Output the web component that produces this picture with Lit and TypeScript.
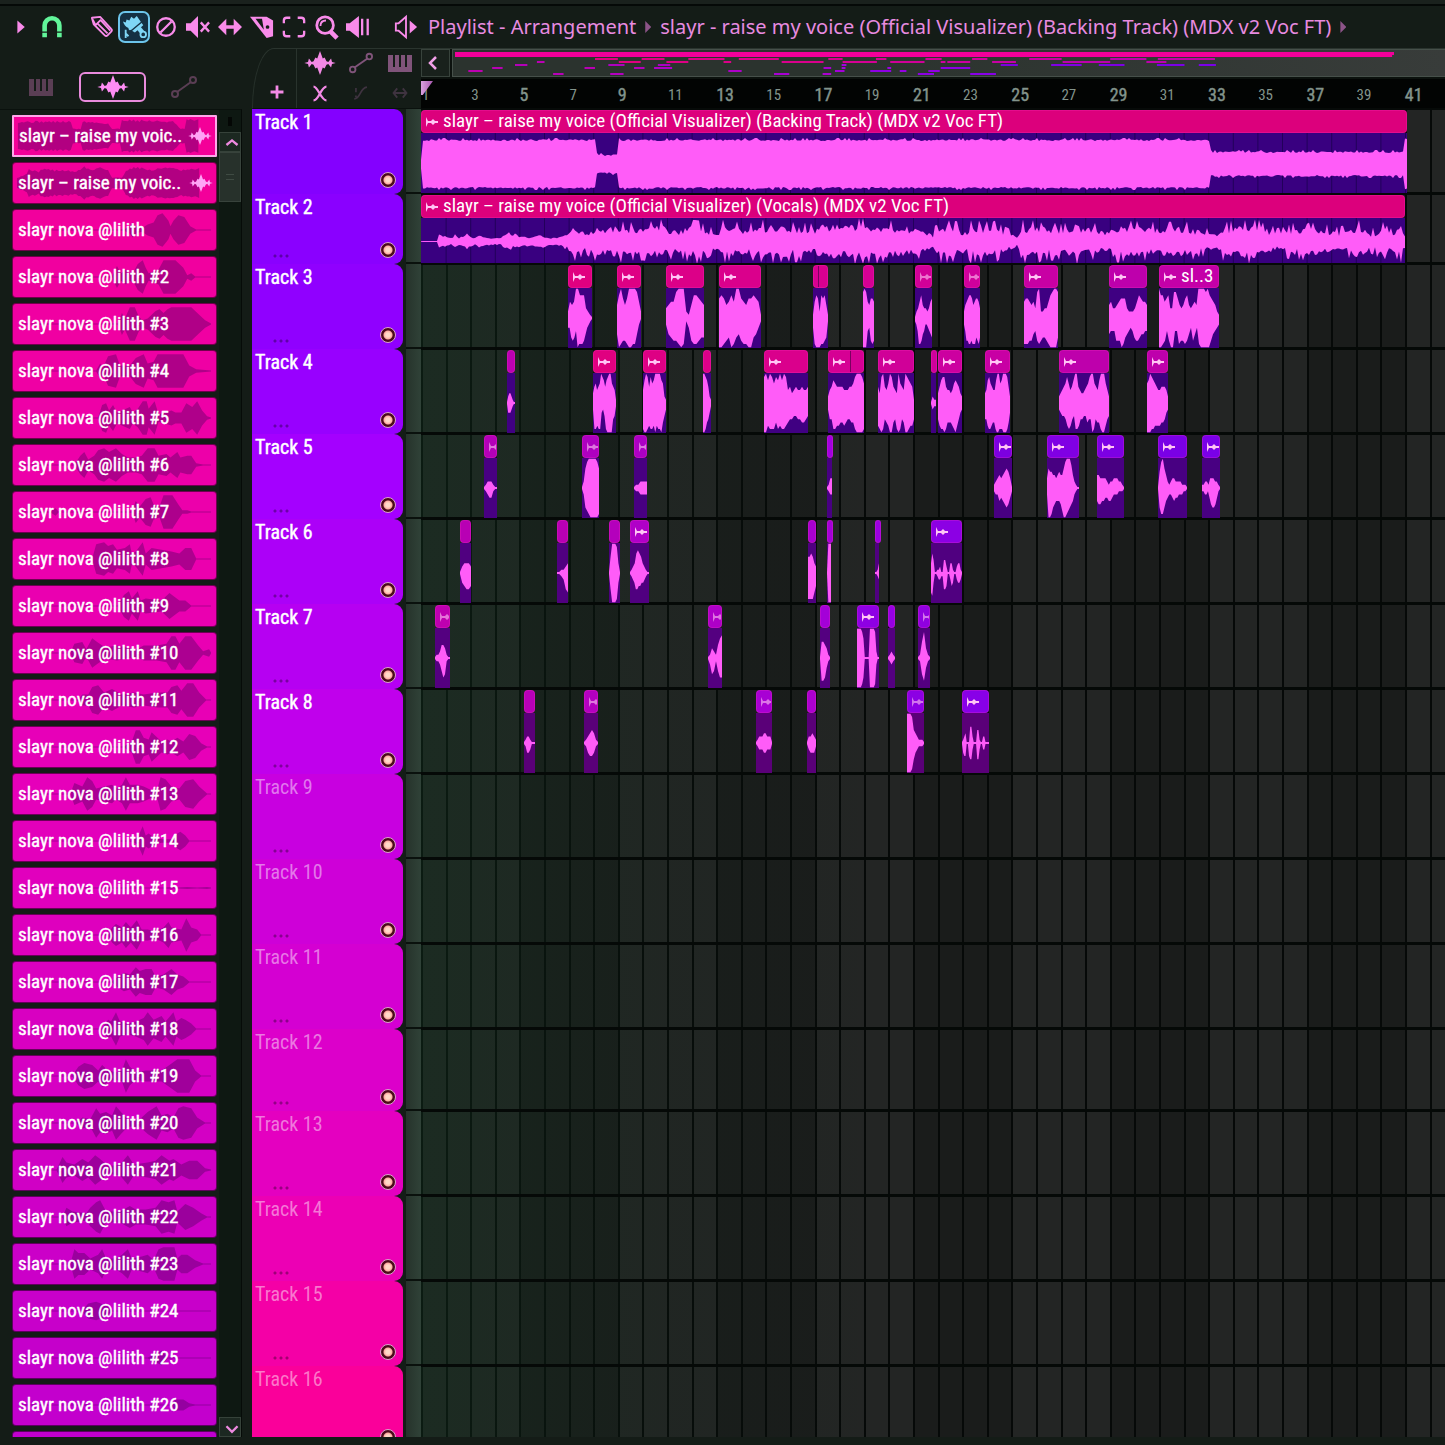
import { LitElement, html, svg, css, nothing } from "lit";
import { customElement, property, state } from "lit/decorators.js";
import { classMap } from "lit/directives/class-map.js";
import { styleMap } from "lit/directives/style-map.js";

/* ---------- timeline data ---------- */

/** Timeline units visible in the window; one bar is BAR units wide. */
const SPAN = 1024;
const BAR = 24.6;
const pct = (u: number) => `${(u / SPAN) * 100}%`;

interface Clip {
  start: number;
  end: number;
  hue: string;
  wave: string;
  label?: string;
  split?: number;
}

interface Track {
  name: string;
  height: number;
  color: string;
  body: string;
  clips: Clip[];
}

const clip = (start: number, end: number, hue: string, wave: string, extra: Partial<Clip> = {}): Clip => ({
  start,
  end,
  hue,
  wave,
  ...extra,
});

const SONG = "slayr – raise my voice (Official Visualizer) (Backing Track) (MDX v2 Voc FT)";
const VOCALS = "slayr – raise my voice (Official Visualizer) (Vocals) (MDX v2 Voc FT)";

const TRACKS: Track[] = [
  { name: "Track 1", height: 85, color: "#8400ff", body: "#390080", clips: [clip(0, 986, "#dc007c", "song", { label: SONG })] },
  { name: "Track 2", height: 70, color: "#8a00ff", body: "#390080", clips: [clip(0, 984, "#dc007c", "vocals", { label: VOCALS })] },
  {
    name: "Track 3",
    height: 85,
    color: "#9000ff",
    body: "#3f0082",
    clips: [
      clip(147, 171, "#e00080", "2545997773210/3367649888753210"),
      clip(196, 220, "#de0084", "4796469999852/5987789988520"),
      clip(245, 283, "#dc0088", "3455899921477654/2567789813788766"),
      clip(298, 340, "#da008c", "676457599654667651/998769865788996531"),
      clip(392, 407, "#d80090", "1576276741/3899988761", { split: 400 }),
      clip(442, 453, "#d60094", "89854665/99943787"),
      clip(494, 511, "#d20098", "023574332356/12488754223456"),
      clip(543, 559, "#d0009c", "2456776456653/24778878886786"),
      clip(603, 637, "#c800a4", "5665453892233578998/8887754787667899996"),
      clip(688, 726, "#be00ac", "45334566632223576554/5444777986543467765544"),
      clip(738, 798, "#c400a8", "977567338864346743454999989765421/9987479944877875375389999975432", { label: "sl..3" }),
    ],
  },
  {
    name: "Track 4",
    height: 85,
    color: "#9800ff",
    body: "#400082",
    clips: [
      clip(86, 94, "#bc00b4", "02332100/03332100"),
      clip(172, 195, "#e00080", "356456987578996541/28878832489999541"),
      clip(222, 245, "#de0084", "4798586799997621/8998788797889642"),
      clip(282, 290, "#dc0088", "9987521/9986531"),
      clip(343, 387, "#da008c", "89798687979845345445445/99788868788765544556654"),
      clip(407, 443, "#d60094", "245765555444556899986/255887766765566899998", { split: 433 }),
      clip(457, 493, "#d00098", "5389546985439654987651/7898567996589856998775"),
      clip(510, 515, "#d0009c", "0211/0211"),
      clip(517, 541, "#cc00a0", "3578854434676532/5788986667897532"),
      clip(564, 589, "#c800a4", "3478654479967999852/55788766899888999863"),
      clip(638, 688, "#be00ac", "23456864579954334568996547999642/2344578754887554465598566899754"),
      clip(726, 747, "#be00ac", "67987654455542/99988777766532"),
    ],
  },
  {
    name: "Track 5",
    height: 85,
    color: "#a400ff",
    body: "#480082",
    clips: [
      clip(63, 76, "#b400b8", "01222100/01233100"),
      clip(161, 178, "#ae00c0", "02689999986/02678999998"),
      clip(213, 226, "#ac00c4", "0112222/0112222"),
      clip(406, 411, "#a200e0", "0133/0122"),
      clip(573, 591, "#7c00e0", "12343456530/12243456531"),
      clip(626, 658, "#8000e4", "3655443454468999742100/2998654445799876542100"),
      clip(676, 703, "#7c00e4", "44333321223332210/45544334432221110"),
      clip(737, 766, "#7a00e6", "0589642123322221110/0688643223433222110"),
      clip(781, 799, "#7a00e8", "112213332210/1122135665310"),
    ],
  },
  {
    name: "Track 6",
    height: 85,
    color: "#ac00f8",
    body: "#500080",
    clips: [
      clip(39, 50, "#b800b4", "023332/034554"),
      clip(136, 147, "#b800b4", "001123/001256"),
      clip(188, 199, "#b400bc", "05999830/05999830"),
      clip(209, 228, "#b000c8", "0123676532100/01235544332100"),
      clip(387, 395, "#a800d0", "556532/888864"),
      clip(406, 410, "#a400d8", "0999/0999"),
      clip(454, 458, "#9c00e0", "0013/0012"),
      clip(510, 541, "#8c00e4", "3640011200442003310023310/6730012211554002430023320"),
    ],
  },
  {
    name: "Track 7",
    height: 85,
    color: "#b600f2",
    body: "#540080",
    clips: [
      clip(14, 29, "#be00b0", "0112443100/0112465100"),
      clip(287, 301, "#ae00c8", "01321467/02541466"),
      clip(399, 409, "#a400d8", "0554310/0776310"),
      clip(436, 458, "#8e00e4", "999986000099998200/999986000099998200"),
      clip(467, 474, "#9600e4", "01210/01210"),
      clip(497, 509, "#9000e0", "0158310/0157310"),
    ],
  },
  {
    name: "Track 8",
    height: 85,
    color: "#c000ec",
    body: "#5a0078",
    clips: [
      clip(103, 114, "#b800b8", "01221000/01332000"),
      clip(163, 177, "#b400c0", "01234310/01344310"),
      clip(335, 351, "#a800d4", "01222332220/01222332220"),
      clip(386, 395, "#ac00d0", "022321/023331"),
      clip(486, 503, "#8c00e4", "99984321110/99985321110"),
      clip(541, 568, "#8800e8", "012300055200044100220000/034400455200055200220000"),
    ],
  },
  { name: "Track 9", height: 85, color: "#c800e0", body: "", clips: [] },
  { name: "Track 10", height: 85, color: "#ce00d8", body: "", clips: [] },
  { name: "Track 11", height: 85, color: "#d400d2", body: "", clips: [] },
  { name: "Track 12", height: 82, color: "#dc00ca", body: "", clips: [] },
  { name: "Track 13", height: 85, color: "#e400c0", body: "", clips: [] },
  { name: "Track 14", height: 85, color: "#ec00b4", body: "", clips: [] },
  { name: "Track 15", height: 85, color: "#f400a6", body: "", clips: [] },
  { name: "Track 16", height: 85, color: "#fa009a", body: "", clips: [] },
];

/* Sample thumbnails: alternating x and amplitude (0–9). */
const THUMBS = [
  "4 8 58 8 60 4 68 4 70 8 97 7 99 4 109 4 110 9 162 8 170 4 174 4 175 9 188 9 189 0",
  "4 3 14 5 16 8 25 6 30 8 42 7 55 7 62 6 72 9 80 7 88 9 97 7 99 3 111 3 113 7 125 9 140 7 155 9 170 7 188 8 189 2",
  "112 0 118 2 121 4 124 2 130 1 136 3 142 4 146 8 151 9 157 5 159 2 162 5 167 8 173 7 179 2 185 0",
  "100 0 105 6 109 2 114 4 117 2 122 3 126 7 131 9 134 5 137 2 147 4 152 9 164 9 172 5 176 1 180 2 184 0",
  "106 0 110 6 113 3 118 9 123 9 127 4 131 2 136 3 144 7 148 8 152 6 156 8 160 9 180 9 188 5 194 2 200 0",
  "84 0 88 4 91 2 96 8 104 9 108 3 118 3 124 7 132 9 136 4 142 5 146 9 172 9 178 3 185 1",
  "86 0 90 7 94 8 97 4 101 7 105 3 110 4 118 6 121 3 126 5 131 9 135 9 137 5 143 9 147 2 160 4 164 3 170 3 175 8 181 6 186 9 191 4 196 1",
  "62 0 68 5 72 7 76 3 82 5 86 8 92 9 97 7 104 9 110 6 116 4 124 4 130 5 136 9 143 9 147 5 155 6 159 4 166 7 169 4 176 5 180 5 185 1 192 0",
  "38 0 43 2 46 0 120 0 124 6 128 3 134 7 139 8 142 4 148 3 152 9 161 9 167 4 171 1 176 1 180 0",
  "80 0 84 8 92 9 96 7 101 8 105 5 113 6 118 8 120 3 124 4 131 9 134 3 140 6 150 5 160 4 168 3 174 6 180 6 185 0",
  "106 0 112 6 117 8 120 4 126 8 129 3 134 4 150 3 158 7 163 5 168 3 174 3 180 0",
  "58 0 62 5 70 6 74 2 80 8 85 6 93 3 105 4 115 3 125 2 132 4 145 4 155 5 160 9 164 9 168 5 174 9 180 9 187 4 192 1 198 2 200 0",
  "66 0 70 3 76 3 80 7 86 8 92 4 100 6 110 3 122 4 132 3 146 4 156 4 160 7 166 8 170 5 176 9 182 9 188 4 195 0",
  "112 0 120 3 124 9 128 9 132 5 137 4 140 8 144 6 150 3 156 4 160 3 166 5 172 3 178 7 184 6 190 2 196 0",
  "58 0 62 6 66 5 70 4 75 9 80 7 84 3 92 4 100 5 104 3 110 5 114 9 118 5 126 5 132 4 140 2 146 3 149 9 154 8 160 4 168 3 174 7 182 8 188 4 196 0",
  "120 0 126 2 131 8 134 3 137 4 142 2 150 1 160 1 166 4 169 5 174 3 178 0",
  "150 0 158 0.4 166 0.1 176 0.6 186 0.2 196 0.5 200 0",
  "96 0 100 4 104 6 110 4 114 7 119 4 125 8 130 3 136 3 144 2 152 4 157 7 160 4 170 3 175 9 180 4 186 3 190 0",
  "100 0 106 3 112 5 118 4 124 8 128 6 134 7 140 7 144 3 152 4 160 7 166 4 172 3 178 0",
  "90 0 96 5 99 4 104 9 108 4 116 3 124 4 132 6 136 9 142 5 150 7 154 4 162 9 165 4 170 6 174 5 180 3 185 0",
  "60 0 66 5 72 7 80 6 86 3 90 6 96 3 104 2 110 3 114 9 118 5 124 2 134 3 140 3 150 3 158 6 166 9 178 9 184 3 190 0",
  "64 0 70 3 78 2 84 8 88 5 94 6 100 4 104 9 109 6 116 2 128 2 136 6 145 9 150 4 156 5 162 3 167 8 172 9 180 8 186 3 194 0",
  "44 0 50 7 54 4 62 3 70 6 76 4 83 8 88 6 96 2 108 3 116 8 122 3 136 4 144 5 150 8 158 5 162 6 170 3 178 5 186 5 194 1",
  "50 0 54 5 60 3 74 2 78 5 84 8 88 9 94 3 108 3 118 6 124 4 134 4 144 5 150 9 157 8 163 9 166 3 174 7 182 5 190 2 196 0",
  "58 0 62 8 66 6 72 6 78 3 86 5 90 8 94 3 104 3 110 5 116 8 120 3 130 4 136 5 142 2 147 8 152 9 163 9 166 3 170 5 176 5 184 2 192 0",
  "70 0 76 4 84 5 94 3 100 0",
  "136 0 144 2 150 4 156 0",
  "160 0 164 3 172 3 178 1 184 0",
  "60 0 80 4 120 6 160 4 190 0",
];

const SAMPLES = THUMBS.map((wave, i) => ({
  name: i < 2 ? "slayr – raise my voic.." : i < 28 ? `slayr nova @lilith${i > 2 ? ` #${i - 1}` : ""}` : "",
  full: i < 2,
  wave,
}));

/* ---------- waveform helpers ---------- */

const mix = (a: number[], b: number[], t: number) => `rgb(${a.map((v, i) => Math.round(v + (b[i] - v) * t)).join(" ")})`;

const sampleColor = (i: number) => {
  const t = i / 28;
  return t < 0.5
    ? mix([244, 0, 152], [230, 0, 186], t * 2)
    : mix([230, 0, 186], [192, 0, 206], (t - 0.5) * 2);
};

function rng(seed: number) {
  let s = seed;
  return () => {
    s = (s * 16807) % 2147483647;
    return s / 2147483647;
  };
}

function envelope(points: number[][], x: number) {
  for (let i = 1; i < points.length; i++) {
    const [x0, a0] = points[i - 1];
    const [x1, a1] = points[i];
    if (x <= x1) return a0 + ((a1 - a0) * (x - x0)) / Math.max(1, x1 - x0);
  }
  return points[points.length - 1][1];
}

/** Mirrored outline around y = 0 from upper and lower amplitudes. */
function outline(up: number[][], down: number[][]) {
  const top = up.map(([x, a]) => `${x.toFixed(1)} ${(-a).toFixed(2)}`);
  const low = [...down].reverse().map(([x, a]) => `${x.toFixed(1)} ${a.toFixed(2)}`);
  return `M${[...top, ...low].join("L")}Z`;
}

function digitPath(wave: string) {
  const [u, d] = wave.split("/");
  const side = (s: string) => [...s].map((c, i) => [(i * 100) / (s.length - 1), Math.max(0.3, Number(c))]);
  return outline(side(u), side(d ?? u));
}

function songPath() {
  const rand = rng(77);
  const level = (x: number) => (x < 2 ? 4 : x < 175 ? 23 : x < 198 ? 8 : x < 790 ? 23 : x < 984 ? 11 : 24);
  const side = () => {
    const out: number[][] = [];
    for (let x = 0; x <= 986; x += 2) {
      const r = rand();
      out.push([x, level(x) + (r > 0.88 ? 3 : r * 2)]);
    }
    return out;
  };
  return outline(side(), side());
}

function vocalsPath() {
  const rand = rng(4242);
  const env = [
    [0, 0.5], [16, 0.5], [18, 6], [23, 5], [30, 3], [34, 7], [38, 3], [46, 7], [54, 3], [58, 6], [70, 3], [80, 3],
    [88, 10], [98, 5], [112, 4], [120, 6], [130, 3], [140, 4], [147, 9], [149, 17], [165, 9], [174, 15], [195, 17],
    [215, 14], [240, 17], [255, 12], [275, 18], [290, 10], [297, 6], [300, 17], [325, 14], [345, 18], [395, 14],
    [400, 18], [440, 18], [470, 17], [495, 15], [512, 5], [516, 18], [538, 16], [542, 8], [550, 17], [575, 16],
    [596, 4], [602, 17], [640, 14], [655, 18], [688, 10], [692, 17], [730, 15], [765, 16], [796, 6], [802, 15],
    [835, 18], [857, 9], [870, 14], [900, 14], [915, 10], [932, 13], [936, 18], [950, 8], [962, 15], [970, 9],
    [980, 16], [984, 8],
  ];
  const side = () => {
    const out: number[][] = [];
    for (let x = 0; x <= 984; x += 2) {
      const a = envelope(env, x);
      const r = rand();
      out.push([x, a < 8 ? a * (0.75 + r * 0.4) : a * (0.5 + r * 0.55) + (r > 0.82 ? 4 : 0)]);
    }
    return out;
  };
  return outline(side(), side());
}

function thumbPath(wave: string, full: boolean) {
  const n = wave.split(" ").map(Number);
  const points: number[][] = [];
  for (let i = 0; i < n.length; i += 2) points.push([n[i], n[i + 1] * 1.85]);
  if (full) {
    const rand = rng(31);
    const out: number[][] = [];
    for (let x = 4; x <= 189; x += 2) out.push([x, envelope(points, x) * (0.88 + rand() * 0.15)]);
    return outline(out, out);
  }
  const padded = [[6, 0.4], ...points.map(([x, a]) => [x, Math.max(0.4, a)]), [200, 0.4]];
  return outline(padded, padded);
}

/* ---------- icons ---------- */

const ICONS = {
  play: svg`<path d="M8 6l8 7-8 7z" fill="currentColor"/>`,
  magnet: svg`<path d="M5 24V11.500a8 8 0 0 1 16 0V24" fill="none" stroke="currentColor" stroke-width="5"/><path d="M2 18.500h7M17 18.500h7" stroke="#141c17" stroke-width="1.500"/>`,
  pencil: svg`<g fill="none" stroke="currentColor" stroke-width="2" stroke-linejoin="round"><path d="M2 3l9-1 12 13c1 1 1 2 0 3l-4 4c-1 1-2 1-3 0L4 10z"/><path d="M8 9l11 11M12 6l10 11M3 5l3 6 6-6"/></g>`,
  brush: svg`<path d="M1 7l3 1 1-3 3 1 2-4 3 2 3-3 7 10-9 8c-2-1-3-2-4-3-2 1-3 0-3-2-3-1-5-4-6-7z" fill="currentColor"/><path d="M10 17L22 7" stroke="#143043" stroke-width="1.500"/><path d="M18 14l5 6" stroke="currentColor" stroke-width="5"/><circle cx="23" cy="21" r="3" fill="#143043" stroke="currentColor" stroke-width="2"/><path d="M4 16v9M4 20l3 3" stroke="currentColor" stroke-width="2"/>`,
  ban: svg`<g fill="none" stroke="currentColor" stroke-width="2.500"><circle cx="13" cy="13" r="9.500"/><path d="M19 7L7 19"/></g>`,
  mute: svg`<path d="M0 9h5l8-8v24l-8-8H0z" fill="currentColor"/><path d="M16 8l9 10M25 8l-9 10" stroke="currentColor" stroke-width="2.500"/>`,
  slip: svg`<path d="M0 13l9-9v7h8V4l9 9-9 9v-7H9v7z" fill="currentColor"/>`,
  slice: svg`<path d="M0 2h18l7 4v17l-7 2z" fill="currentColor"/><path d="M6 4h7l2 12z" fill="#141c17"/><circle cx="19" cy="13" r="2" fill="#141c17"/>`,
  select: svg`<g fill="none" stroke="currentColor" stroke-width="2.500"><path d="M2 9V6a3 3 0 0 1 3-3h4M17 3h4a3 3 0 0 1 3 3v3M24 17v3a3 3 0 0 1-3 3h-4M9 23H5a3 3 0 0 1-3-3v-3"/></g>`,
  zoom: svg`<circle cx="12" cy="11" r="9" fill="none" stroke="currentColor" stroke-width="3"/><path d="M7 12c0-4 2-6 6-6" fill="none" stroke="currentColor" stroke-width="2"/><path d="M18 18l7 7" stroke="currentColor" stroke-width="5"/>`,
  playback: svg`<path d="M0 9h4l10-8v24L4 17H0z" fill="currentColor"/><path d="M17.500 4v18M23.500 4v18" stroke="currentColor" stroke-width="2.500"/>`,
  speaker: svg`<path d="M2 9h3l8-7v22l-8-7H2z" fill="none" stroke="currentColor" stroke-width="2"/><path d="M17 6l8 7-8 7z" fill="currentColor"/>`,
  keys: svg`<path d="M1 5h24v17H1z" fill="currentColor"/><path d="M7 5v12M13 5v12M19 5v12" stroke="#141c17" stroke-width="2"/>`,
  wave: svg`<path d="M-4 13l4-1 1-4 3 4 2-1 2-4 2 1 3-8 3 8 2-1 2 4 2 1 3-4 1 4 4 1-4 1-1 4-3-4-2 1-2 4-2-1-3 8-3-8-2 1-2-4-2-1-3 4-1-4z" fill="currentColor"/>`,
  link: svg`<g fill="none" stroke="currentColor" stroke-width="2"><circle cx="4" cy="20" r="3"/><circle cx="22" cy="6" r="3"/><path d="M6 18L20 8"/></g>`,
  plus: svg`<path d="M13 6v14M6 13h14" stroke="currentColor" stroke-width="3"/>`,
  cross: svg`<path d="M6 6c5 0 8 15 14 15M20 6c-6 0-8 15-14 15" fill="none" stroke="currentColor" stroke-width="2.500"/>`,
  curve: svg`<path d="M5 20c8 0 6-13 15-14M7 7v5M7 16v2" fill="none" stroke="currentColor" stroke-width="2"/>`,
  spread: svg`<path d="M6 13h14M10 8l-4 5 4 5M16 8l4 5-4 5" fill="none" stroke="currentColor" stroke-width="2"/>`,
  left: svg`<path d="M13 7l-6 6 6 6" fill="none" stroke="currentColor" stroke-width="2.500"/>`,
  up: svg`<path d="M7 13l6-5 6 5" fill="none" stroke="currentColor" stroke-width="2.500"/>`,
  down: svg`<path d="M7 9l6 6 6-6" fill="none" stroke="currentColor" stroke-width="2.500"/>`,
};
type IconName = keyof typeof ICONS;

const icon = (name: IconName, size = 26) =>
  html`<svg class="icon" width=${size} height=${size} viewBox="0 0 26 26" aria-hidden="true">${ICONS[name]}</svg>`;

const shared = css`
  :host {
    display: block;
    box-sizing: border-box;
    font-family: "Roboto Condensed", "Open Sans Condensed", "Noto Sans Condensed", "Open Sans", sans-serif;
  }
  *,
  *::before,
  *::after {
    box-sizing: border-box;
  }
  button {
    margin: 0;
    padding: 0;
    border: 0;
    background: none;
    color: inherit;
    font: inherit;
  }
  .icon {
    display: block;
    flex: none;
    overflow: visible;
  }
`;

/* ---------- top toolbar ---------- */

@customElement("playlist-toolbar")
class PlaylistToolbar extends LitElement {
  @state() private tool = "brush";

  static styles = [
    shared,
    css`
      .bar {
        display: flex;
        align-items: center;
        height: 48px;
        padding: 2px 0 0 10px;
        border-top: 4px solid #1a211d;
        box-shadow: inset 0 2px 0 #050907;
        color: #f98bea;
        white-space: nowrap;
        overflow: hidden;
      }
      .tools {
        display: flex;
        margin: 0 16px 0 22px;
      }
      .tool {
        display: grid;
        place-items: center;
        width: 32px;
        height: 32px;
        border: 2px solid transparent;
        border-radius: 7px;
      }
      .tool.on {
        border-color: #6cc4ea;
        background: #143043;
        color: #7fd6f6;
      }
      .snap {
        margin-left: 6px;
        color: #62f59a;
      }
      .crumbs {
        display: flex;
        align-items: center;
        margin: 0 0 0 6px;
        padding: 0;
        list-style: none;
        font: 20px/24px "Noto Sans", "Open Sans", sans-serif;
        color: #e88be0;
      }
      .tip {
        width: 6px;
        height: 12px;
        margin: 0 9px;
        background: #8c5488;
        clip-path: polygon(0 0, 100% 50%, 0 100%);
      }
    `,
  ];

  render() {
    const tools: IconName[] = ["pencil", "brush", "ban", "mute", "slip", "slice", "select", "zoom", "playback"];
    return html`<header class="bar">
      <button aria-label="Menu">${icon("play", 24)}</button>
      <button class="snap" aria-label="Snap">${icon("magnet", 24)}</button>
      <div class="tools">
        ${tools.map(
          (t) => html`<button
            class=${classMap({ tool: true, on: t === this.tool })}
            aria-label=${t}
            aria-pressed=${t === this.tool}
            @click=${() => (this.tool = t)}
          >${icon(t, 24)}</button>`,
        )}
      </div>
      <button class="tool" aria-label="Audition">${icon("speaker", 24)}</button>
      <ol class="crumbs">
        <li>Playlist - Arrangement</li>
        <li class="tip"></li>
        <li>slayr - raise my voice (Official Visualizer) (Backing Track) (MDX v2 Voc FT)</li>
        <li class="tip"></li>
      </ol>
    </header>`;
  }
}

/* ---------- sample picker ---------- */

@customElement("sample-picker")
class SamplePicker extends LitElement {
  @state() private selected = 0;

  static styles = [
    shared,
    css`
      :host {
        display: flex;
        flex-direction: column;
        min-height: 0;
      }
      .tabs {
        display: flex;
        flex: none;
        align-items: center;
        gap: 25px;
        height: 61px;
        padding: 16px 0 0 28px;
        color: #5a3e54;
      }
      .tab {
        display: grid;
        place-items: center;
        height: 30px;
      }
      .tab.on {
        width: 67px;
        border: 2px solid #e98bdd;
        border-radius: 6px;
        color: #ff8df4;
      }
      .pane {
        display: flex;
        flex: 1;
        min-height: 0;
        border-top: 1px solid #0a110d;
        border-right: 1px solid #060b08;
      }
      .list {
        display: flex;
        flex: 1;
        flex-direction: column;
        gap: 5px;
        min-width: 0;
        margin: 0;
        padding: 5px 2px 0 12px;
        overflow: hidden;
        list-style: none;
      }
      .item {
        flex: none;
        height: 42px;
      }
      .sample {
        display: grid;
        align-items: center;
        width: 100%;
        height: 100%;
        border: 1px solid #0008;
        border-radius: 4px;
        overflow: hidden;
        color: #fff;
        font-size: 19px;
        line-height: 24px;
        text-align: left;
        white-space: nowrap;
      }
      .sample.on {
        border: 2px solid #ffa6ea;
        border-radius: 1px;
      }
      .sample > * {
        grid-area: 1 / 1;
      }
      .thumb {
        display: block;
        width: 100%;
        height: 36px;
        fill: #50005f;
        fill-opacity: 0.4;
      }
      .text {
        display: flex;
        align-items: center;
        justify-content: space-between;
        padding: 0 6px 0 5px;
        -webkit-text-stroke: 0.4px #fff;
      }
      .sample .icon {
        color: #ffa4f6;
      }
      .scroll {
        display: flex;
        flex: none;
        flex-direction: column;
        width: 22px;
        background: #0e1812;
        color: #ee8ae0;
      }
      .mark {
        width: 4px;
        height: 9px;
        margin: 7px auto 6px;
        background: #040705;
      }
      .arrow {
        display: grid;
        flex: none;
        place-items: center;
        width: 22px;
        height: 20px;
        border: 1px solid #36423a;
        background: #1c2821;
      }
      .grip {
        display: grid;
        place-items: center;
        height: 50px;
        border: 1px solid #38433c;
        background: #27312b;
      }
      .grip::before {
        content: "";
        width: 8px;
        height: 6px;
        border: solid #3f4b43;
        border-width: 1px 0;
      }
      .fill {
        flex: 1;
      }
    `,
  ];

  render() {
    return html`<div class="tabs">
        <button class="tab" aria-label="Patterns">${icon("keys", 26)}</button>
        <button class="tab on" aria-label="Audio">${icon("wave", 24)}</button>
        <button class="tab" aria-label="Automation">${icon("link", 26)}</button>
      </div>
      <div class="pane">
        <ul class="list">
          ${SAMPLES.map(
            (s, i) => html`<li class="item">
              <button
                class=${classMap({ sample: true, on: i === this.selected })}
                style=${styleMap({ backgroundColor: sampleColor(i) })}
                @click=${() => (this.selected = i)}
              >
                <svg class="thumb" viewBox="0 -18 205 36" preserveAspectRatio="none" aria-hidden="true">
                  <path d=${thumbPath(s.wave, s.full)}></path>
                </svg>
                <span class="text"><span>${s.name}</span>${s.full ? icon("wave", 18) : nothing}</span>
              </button>
            </li>`,
          )}
        </ul>
        <div class="scroll">
          <span class="mark"></span>
          <button class="arrow" aria-label="Scroll up">${icon("up", 24)}</button>
          <div class="grip"></div>
          <div class="fill"></div>
          <button class="arrow" aria-label="Scroll down">${icon("down", 24)}</button>
        </div>
      </div>`;
  }
}

/* ---------- track headers ---------- */

@customElement("track-heads")
class TrackHeads extends LitElement {
  static styles = [
    shared,
    css`
      :host {
        display: flex;
        flex-direction: column;
        min-height: 0;
      }
      .modes {
        display: flex;
        flex: none;
        height: 61px;
        border-top: 1px solid #2a342e;
        border-bottom: 1px solid #0a110d;
        border-top-left-radius: 22px 60px;
        border-left: 1px solid #26302a;
        color: #f48ae6;
      }
      .add {
        display: flex;
        align-items: flex-end;
        justify-content: center;
        width: 45px;
        padding: 0 0 4px 4px;
        border-right: 1px solid #29332d;
      }
      .grid {
        display: grid;
        flex: 1;
        grid-template-columns: 46px 36px 42px;
        grid-template-rows: 28px 32px;
        place-items: center;
      }
      .dim {
        color: #80547a;
      }
      .faint {
        color: #3f3340;
      }
      .rows {
        display: flex;
        flex: 1;
        min-height: 0;
        overflow: hidden;
      }
      .heads {
        flex: 1;
      }
      .head {
        display: flex;
        flex-direction: column;
        justify-content: space-between;
        padding: 1px 7px 6px 3px;
        border-radius: 0 9px 9px 0;
        color: #fff;
        font-size: 20px;
        line-height: 24px;
      }
      .head.empty {
        color: #ffffff78;
      }
      .name {
        -webkit-text-stroke: 0.4px currentColor;
      }
      .empty .name {
        -webkit-text-stroke: 0;
      }
      .foot {
        display: flex;
        align-items: flex-end;
        justify-content: space-between;
        padding-left: 17px;
      }
      .more {
        width: 18px;
        height: 4px;
        background: radial-gradient(circle, #0005 1px, transparent 2px) 0 0 / 6px 4px;
      }
      .first .more {
        visibility: hidden;
      }
      .led {
        width: 16px;
        height: 16px;
        border: 1px solid #d9a0c8;
        border-radius: 50%;
        background: radial-gradient(circle, #ffd9c8 0 2px, #ffa9a0 4px, #4c0b1c 5px 6px);
      }
      .strip {
        width: 15px;
        margin-left: 3px;
      }
      .slot {
        border-bottom: 2px solid #0a110d;
        background: linear-gradient(90deg, #26332b, #304238);
      }
    `,
  ];

  render() {
    return html`<div class="modes">
        <div class="add"><button aria-label="Add track">${icon("plus", 24)}</button></div>
        <div class="grid">
          <button aria-label="Audio clips">${icon("wave", 24)}</button>
          <button class="dim" aria-label="Automation clips">${icon("link", 24)}</button>
          <button class="dim" aria-label="Pattern clips">${icon("keys", 26)}</button>
          <button aria-label="Crossfade">${icon("cross", 24)}</button>
          <button class="faint" aria-label="Curve">${icon("curve", 22)}</button>
          <button class="faint" aria-label="Spread">${icon("spread", 24)}</button>
        </div>
      </div>
      <div class="rows">
        <div class="heads">
          ${TRACKS.map(
            (t, i) => html`<section
              class=${classMap({ head: true, first: i === 0, empty: !t.clips.length })}
              style=${styleMap({ height: `${t.height}px`, backgroundColor: t.color })}
            >
              <span class="name">${t.name}</span>
              <div class="foot">
                <span class="more"></span>
                <button class="led" aria-label="Mute ${t.name}"></button>
              </div>
            </section>`,
          )}
        </div>
        <div class="strip">
          ${TRACKS.map((t) => html`<div class="slot" style=${styleMap({ height: `${t.height}px` })}></div>`)}
        </div>
      </div>`;
  }
}

/* ---------- clip ---------- */

@customElement("audio-clip")
class AudioClip extends LitElement {
  @property({ attribute: false }) clip!: Clip;
  @property() body = "";

  static styles = [
    shared,
    css`
      :host {
        display: flex;
        flex-direction: column;
      }
      .title {
        display: flex;
        flex: none;
        align-items: center;
        gap: 5px;
        height: 23px;
        padding-left: 4px;
        border: 1px solid #ff30c040;
        border-radius: 4px;
        overflow: hidden;
        color: #fff;
        font-size: 19px;
        line-height: 20px;
        white-space: nowrap;
      }
      .name {
        padding-bottom: 1px;
      }
      .split {
        align-self: stretch;
        width: 1px;
        background: #7a0060;
      }
      .mark {
        display: block;
        flex: none;
      }
      .mark.soft {
        opacity: 0.6;
      }
      .body {
        display: block;
        flex: 1;
        min-height: 0;
        width: 100%;
        fill: #ff5cf8;
      }
    `,
  ];

  render() {
    const c = this.clip;
    const w = c.end - c.start;
    const song = c.wave === "song";
    const vocals = c.wave === "vocals";
    const long = song || vocals;
    const path = song ? songPath() : vocals ? vocalsPath() : digitPath(c.wave);
    const box = song ? "0 -31 986 60" : vocals ? "0 -23 984 44" : "0 -9.2 100 18.4";
    const marked = (w > 11 && !c.split) || w > 20;
    return html`<div class="title" style=${styleMap({ backgroundColor: c.hue })}>
        ${marked
          ? html`<svg class=${classMap({ mark: true, soft: w < 18 })} width="12" height="10" viewBox="0 0 12 10" aria-hidden="true">
              <path d="M0 0l2 4h3l2-2 2 2h3v2H9L7 8 5 6H2l-2 4z" fill="#ffc4f4"></path>
            </svg>`
          : nothing}
        ${c.split ? html`<span class="split"></span>` : nothing}
        ${c.label ? html`<span class="name">${c.label}</span>` : nothing}
      </div>
      <svg class="body" style=${styleMap({ backgroundColor: this.body })} viewBox=${box} preserveAspectRatio="none" aria-hidden="true">
        ${long
          ? Array.from({ length: 40 }, (_, i) => svg`<rect x=${(i + 1) * BAR} y="-32" width="1" height="64" fill="#22005a"></rect>`)
          : nothing}
        <path d=${path}></path>
      </svg>`;
  }
}

/* ---------- arrangement ---------- */

@customElement("arrangement-view")
class ArrangementView extends LitElement {
  static styles = [
    shared,
    css`
      :host {
        display: flex;
        flex-direction: column;
        min-width: 0;
        min-height: 0;
        overflow: hidden;
      }
      .nav {
        display: flex;
        flex: none;
        gap: 2px;
        height: 31px;
        padding-bottom: 2px;
        border-top: 1px solid #2a342e;
        background: #0c120e;
      }
      .back {
        display: grid;
        place-items: center;
        width: 29px;
        border: 1px solid #38433c;
        background: #19211c;
        color: #f2a0e8;
      }
      .map {
        display: block;
        flex: 1;
        min-width: 0;
        height: 28px;
        border: solid #46504a;
        border-width: 1px 0 1px 1px;
        background: linear-gradient(90deg, #2b332e 40%, #383c3a);
      }
      .ruler {
        position: relative;
        display: flex;
        flex: none;
        align-items: center;
        height: 29px;
        padding-top: 2px;
        background: #020403;
        color: #83948c;
        font-size: 15px;
        line-height: 20px;
        overflow: hidden;
      }
      .bar {
        flex: none;
        padding-left: 1px;
      }
      .bar.major {
        padding-left: 0;
        font-size: 18px;
        -webkit-text-stroke: 0.4px currentColor;
      }
      .head {
        position: absolute;
        top: 2px;
        left: 0;
        width: 12px;
        height: 14px;
        background: linear-gradient(90deg, #d9a0de, #a858b0);
        clip-path: polygon(0 0, 100% 0, 15% 100%, 0 100%);
      }
      .lanes {
        position: relative;
        flex: 1;
        min-height: 0;
        overflow: hidden;
        border-top: 2px solid #060a08;
      }
      .backdrop {
        position: absolute;
        inset: 0;
        width: 100%;
        height: 100%;
      }
      .backdrop rect {
        shape-rendering: crispEdges;
      }
      .tint {
        position: absolute;
        inset: 0;
        background: linear-gradient(90deg, #12331f70, #12331f48 10%, #0f2a1a20 25%, transparent 45%);
      }
      .lane {
        position: relative;
        border-bottom: 3px solid #050907;
      }
      .clip {
        position: absolute;
        top: 0;
        bottom: -1px;
      }
    `,
  ];

  private minimap() {
    const k = 939 / 985;
    const total = 993;
    const tops = [2, 4, 8, 11, 14, 17, 20, 23];
    return TRACKS.slice(0, 8).flatMap((t, row) =>
      t.clips.map(
        (c) => svg`<rect
          x=${`${((c.start * k + 2) / total) * 100}%`}
          y=${tops[row]}
          width=${`${((Math.max(4, c.end - c.start) * k) / total) * 100}%`}
          height=${row < 2 ? 3 : 2}
          fill=${row < 2 ? "#f2009a" : c.hue}
        ></rect>`,
      ),
    );
  }

  render() {
    const bars = Array.from({ length: 42 }, (_, i) => i);
    return html`<div class="nav">
        <button class="back" aria-label="Scroll left">${icon("left", 26)}</button>
        <svg class="map" aria-hidden="true">${this.minimap()}</svg>
      </div>
      <div class="ruler">
        ${bars
          .filter((b) => b % 2 === 0)
          .map(
            (b) => html`<span class=${classMap({ bar: true, major: b % 4 === 0 && b > 0 })} style=${styleMap({ width: pct(BAR * 2) })}
              >${b + 1}</span
            >`,
          )}
        <span class="head"></span>
      </div>
      <div class="lanes">
        <svg class="backdrop" aria-hidden="true">
          ${bars
            .filter((b) => b % 4 === 0)
            .map(
              (b) => svg`<rect x=${pct(b * BAR)} y="0" width=${pct(BAR * 4)} height="100%" fill=${b % 8 ? "#1a1c1b" : "#232524"}></rect>`,
            )}
          ${bars.map((b) => svg`<rect x=${pct(b * BAR)} y="0" width="2" height="100%" fill="#060908"></rect>`)}
        </svg>
        <div class="tint"></div>
        ${TRACKS.map(
          (t) => html`<div class="lane" style=${styleMap({ height: `${t.height}px` })}>
            ${t.clips.map(
              (c) => html`<audio-clip
                class="clip"
                style=${styleMap({ left: pct(c.start), width: pct(c.end - c.start) })}
                .clip=${c}
                .body=${t.body}
              ></audio-clip>`,
            )}
          </div>`,
        )}
      </div>`;
  }
}

/* ---------- page ---------- */

@customElement("app-root")
class AppRoot extends LitElement {
  static styles = [
    shared,
    css`
      :host {
        display: grid;
        grid-template: auto minmax(0, 1fr) / minmax(0, 1fr);
        height: 100vh;
        padding-bottom: 8px;
        overflow: hidden;
        background: #141c17;
      }
      .main {
        display: grid;
        grid-template-columns: 242px 10px 169px minmax(0, 1fr);
        min-height: 0;
      }
    `,
  ];

  render() {
    return html`<playlist-toolbar></playlist-toolbar>
      <main class="main">
        <sample-picker></sample-picker>
        <span></span>
        <track-heads></track-heads>
        <arrangement-view></arrangement-view>
      </main>`;
  }
}
